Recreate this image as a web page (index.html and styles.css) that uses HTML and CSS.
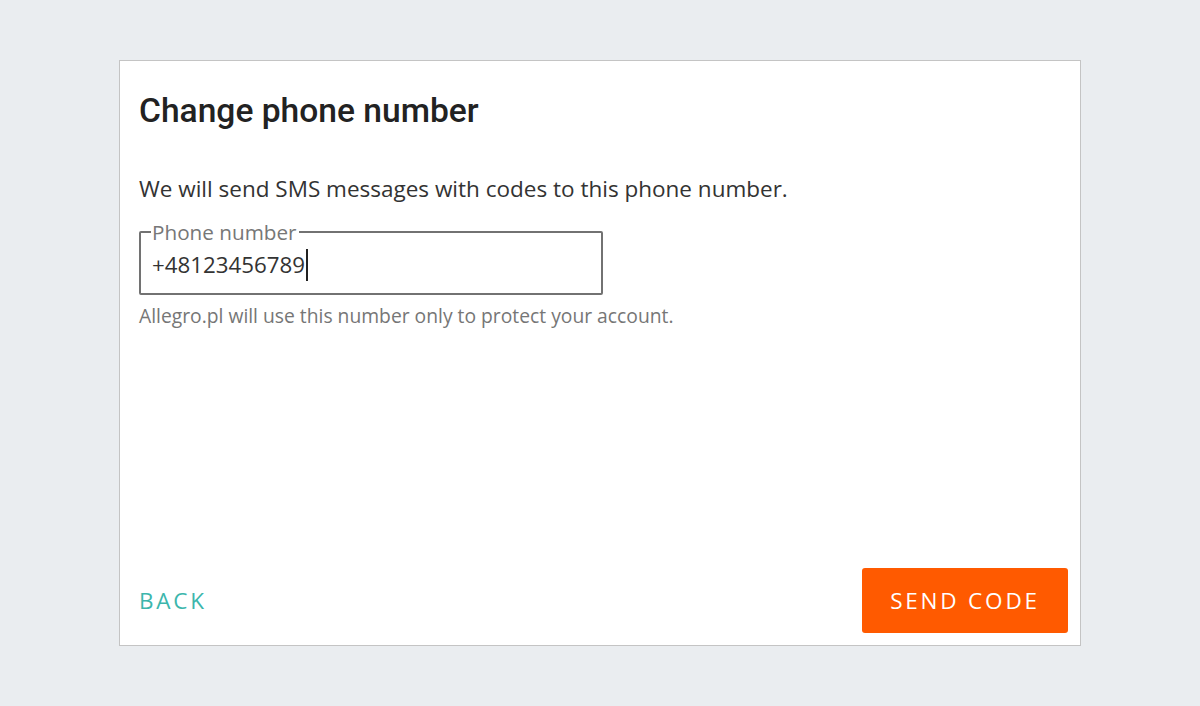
FILE: index.html
```html
<!DOCTYPE html>
<html>
<head>
<meta charset="utf-8">
<link rel="stylesheet" href="styles.css">
</head>
<body>
<div class="card">
  <div class="content">
    <h1 class="title">Change phone number</h1>
    <p class="lead">We will send SMS messages with codes to this phone number.</p>
    <fieldset class="field">
      <legend class="legend">Phone number</legend>
      <div class="value">+48123456789<span class="caret"></span></div>
    </fieldset>
    <p class="help">Allegro.pl will use this number only to protect your account.</p>
  </div>
  <div class="footer">
    <button class="back">BACK</button>
    <button class="send">SEND CODE</button>
  </div>
</div>
</body>
</html>
```

FILE: styles.css
```css
html, body {
  margin: 0;
  height: 100%;
}
body {
  background: #eaedf0;
  display: flex;
  align-items: center;
  justify-content: center;
  font-family: "Open Sans", sans-serif;
}
.card {
  box-sizing: border-box;
  width: 962px;
  height: 586px;
  background: #fff;
  border: 1px solid #c4c4c4;
  display: flex;
  flex-direction: column;
}
.content {
  flex: 1;
  padding: 30px 19px 0 19px;
}
.title {
  font-family: Roboto, sans-serif;
  font-weight: 500;
  font-size: 33.6px;
  line-height: 40px;
  margin: 0;
  color: #222;
}
.lead {
  margin: 43px 0 0 0;
  font-size: 22.5px;
  line-height: 30px;
  color: #333;
}
.field {
  box-sizing: border-box;
  width: 464px;
  height: 75px;
  margin: 16px 0 0 0;
  padding: 0 10px 0 11px;
  border: 2px solid #727272;
  border-radius: 2px;
}
.legend {
  padding: 0 2px 0 1px;
  margin-left: -1px;
  font-size: 20.7px;
  line-height: 24px;
  color: #777;
}
.value {
  font-size: 22.3px;
  line-height: 32px;
  color: #333;
  margin-top: 5px;
  display: flex;
  align-items: center;
}
.caret {
  display: inline-block;
  width: 1.5px;
  height: 32px;
  background: #222;
  margin-left: 1px;
}
.help {
  margin: 8px 0 0 0;
  font-size: 19.3px;
  line-height: 26px;
  color: #767676;
}
.footer {
  display: flex;
  justify-content: space-between;
  align-items: center;
  padding: 0 12px 12px 19px;
}
.back, .send {
  font-family: "Open Sans", sans-serif;
  font-size: 22.5px;
  letter-spacing: 2.8px;
  border: none;
  cursor: pointer;
}
.back {
  background: none;
  color: #3cb6ac;
  padding: 0;
}
.send {
  background: #ff5a00;
  color: #fff;
  width: 206px;
  height: 65px;
  border-radius: 3px;
  padding: 0;
}
```
